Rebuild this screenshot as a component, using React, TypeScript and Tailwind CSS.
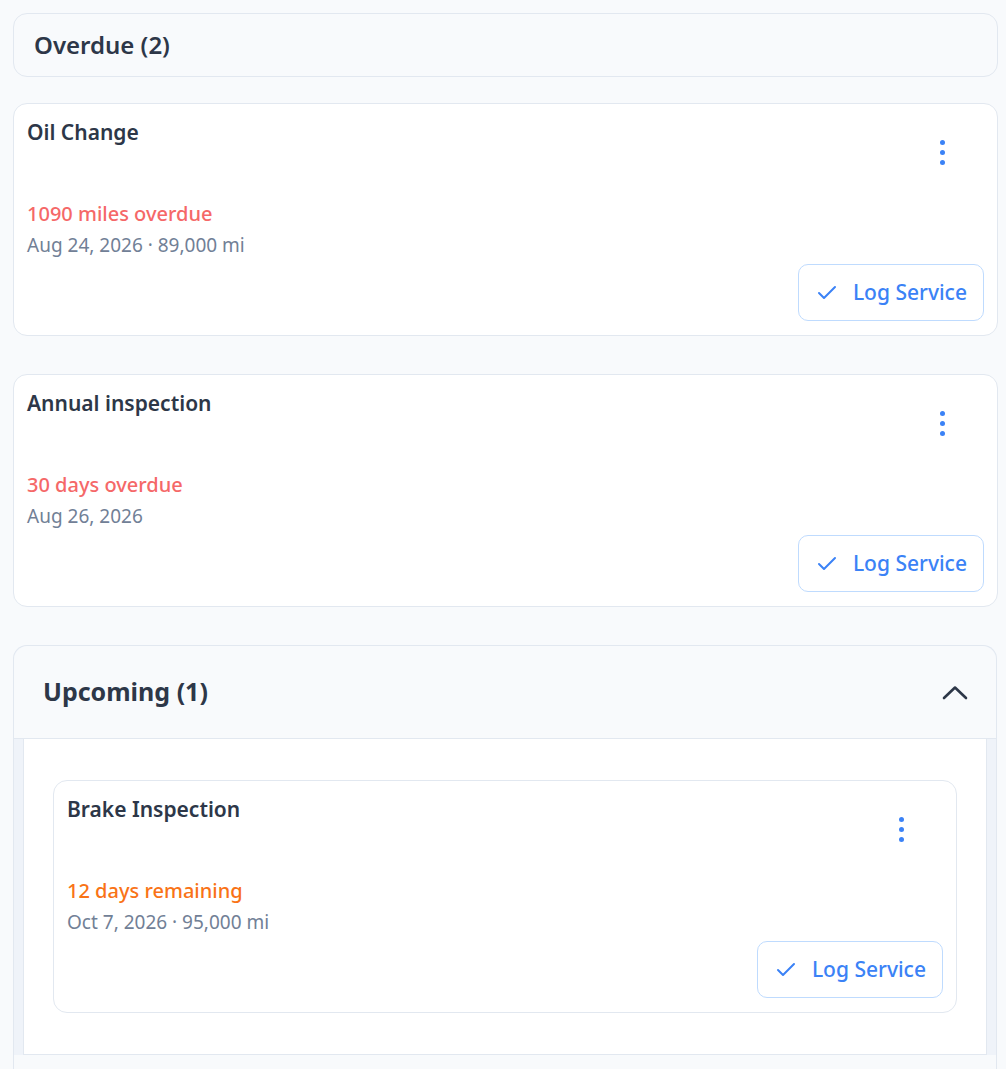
import { Check } from 'lucide-react';

type Item = {
  title: string;
  status: string;
  tone: 'overdue' | 'upcoming';
  meta: string;
};

const overdue: Item[] = [
  { title: 'Oil Change', status: '1090 miles overdue', tone: 'overdue', meta: 'Aug 24, 2026 · 89,000 mi' },
  { title: 'Annual inspection', status: '30 days overdue', tone: 'overdue', meta: 'Aug 26, 2026' },
];

const upcoming: Item[] = [
  { title: 'Brake Inspection', status: '12 days remaining', tone: 'upcoming', meta: 'Oct 7, 2026 · 95,000 mi' },
];

const Kebab = () => (
  <button className="mr-[30px] mt-[15px] flex h-[40px] w-[24px] flex-col items-center justify-center gap-[5px]">
    <span className="h-[5px] w-[5px] rounded-full bg-[#3b82f6]" />
    <span className="h-[5px] w-[5px] rounded-full bg-[#3b82f6]" />
    <span className="h-[5px] w-[5px] rounded-full bg-[#3b82f6]" />
  </button>
);

const ServiceCard = ({ item }: { item: Item }) => {
  return (
    <div className="flex flex-col rounded-[14px] border border-[#e2e8f0] bg-white px-[13px] pb-[14px] pt-[13px]">
      <div className="flex h-[83px] items-start justify-between">
        <h3 className="text-[21px] font-semibold leading-[30px] text-[#2d3748]">{item.title}</h3>
        <Kebab />
      </div>
      <p
        className={
          item.tone === 'overdue'
            ? 'text-[20px] font-medium leading-[28px] text-[#f56868]'
            : 'text-[20px] font-medium leading-[28px] text-[#f97316]'
        }
      >
        {item.status}
      </p>
      <p className="mt-[5px] text-[19px] leading-[24px] text-[#718096]">{item.meta}</p>
      <div className="mt-[7px] flex justify-end">
        <button className="flex h-[57px] items-center gap-[14px] rounded-[10px] border border-[#bfdbfe] pl-[16px] pr-[16px] text-[21px] font-medium text-[#3b82f6]">
          <Check size={24} strokeWidth={2} />
          Log Service
        </button>
      </div>
    </div>
  );
};

export default function App() {
  return (
    <div className="min-h-screen bg-[#f8fafc] pl-[13px] pr-[8px] pt-[13px] font-['Noto_Sans',sans-serif]">
      <div className="flex h-[64px] items-center rounded-[14px] border border-[#e2e8f0] bg-[#f8fafc] px-[20px]">
        <h2 className="text-[24px] font-semibold text-[#2d3748]">Overdue (2)</h2>
      </div>

      <div className="mt-[26px] flex flex-col gap-[38px]">
        {overdue.map((item) => (
          <ServiceCard key={item.title} item={item} />
        ))}
      </div>

      <div className="mt-[38px] mr-[1px] rounded-t-[14px] border-x border-t border-[#e2e8f0] bg-[#eff3f9]">
        <div className="flex h-[93px] items-center justify-between rounded-t-[14px] border-b border-[#e2e8f0] bg-[#f8fafc] pl-[29px] pr-[28px]">
          <h2 className="text-[25px] font-bold text-[#2d3748]">Upcoming (1)</h2>
          <svg width="26" height="15" viewBox="0 0 26 15" fill="none" className="text-[#2d3748]">
            <path d="M2 13 L13 2.5 L24 13" stroke="currentColor" strokeWidth="2.6" strokeLinecap="round" strokeLinejoin="round" />
          </svg>
        </div>
        <div className="mx-[9px] border-x border-b border-[#e2e8f0] bg-white px-[29px] py-[41px]">
          {upcoming.map((item) => (
            <ServiceCard key={item.title} item={item} />
          ))}
        </div>
        <div className="h-[40px] bg-[#f8fafc]" />
      </div>
    </div>
  );
}
